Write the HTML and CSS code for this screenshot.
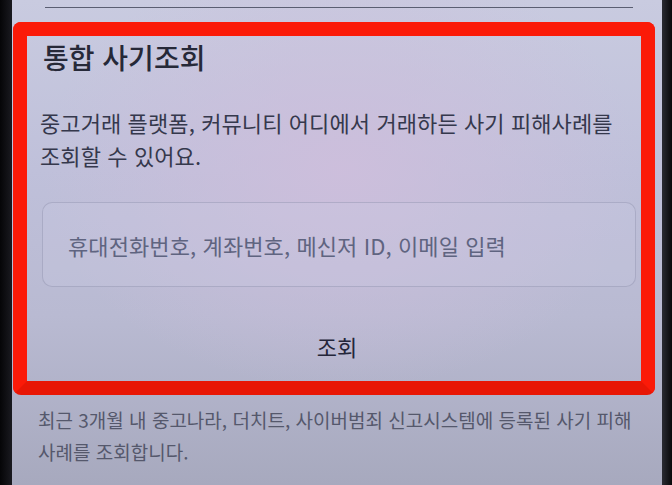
FILE: index.html
```html
<!DOCTYPE html>
<html lang="ko">
<head>
<meta charset="utf-8">
<link rel="stylesheet" href="styles.css">
</head>
<body>
<div class="device">
  <div class="bezel bezel-left"></div>
  <div class="screen">
    <div class="divider"></div>
    <div class="frame">
      <section class="card">
        <h1 class="title">통합 사기조회</h1>
        <p class="desc">중고거래 플랫폼, 커뮤니티 어디에서 거래하든 사기 피해사례를<br>조회할 수 있어요.</p>
        <div class="field"><span class="placeholder">휴대전화번호, 계좌번호, 메신저 ID, 이메일 입력</span></div>
        <div class="action">조회</div>
      </section>
    </div>
    <p class="note">최근 3개월 내 중고나라, 더치트, 사이버범죄 신고시스템에 등록된 사기 피해<br>사례를 조회합니다.</p>
  </div>
  <div class="bezel bezel-right"></div>
</div>
</body>
</html>
```

FILE: styles.css
```css
html, body {
  margin: 0;
  padding: 0;
  width: 672px;
  height: 485px;
  overflow: hidden;
  background: #0b0b0e;
}

.device {
  display: flex;
  width: 672px;
  height: 485px;
  font-family: "Noto Sans CJK KR", "Noto Sans", sans-serif;
}

.bezel-left {
  width: 12px;
  flex: none;
  background: linear-gradient(to right, #050507, #1a1a20);
}

.bezel-right {
  width: 10px;
  flex: none;
  background: linear-gradient(to right, #2a2b33, #08080a);
}

.screen {
  flex: 1;
  display: flex;
  flex-direction: column;
  background:
    radial-gradient(ellipse 300px 220px at 330px 170px, rgba(206, 190, 220, 0.9), rgba(206, 190, 220, 0) 100%),
    linear-gradient(to bottom, #c9cbe0 0%, #bfc0da 35%, #b9bad2 65%, #a7a9be 100%);
}

.divider {
  height: 1px;
  margin: 7px 29px 0 33px;
  background: #5a5e72;
}

.frame {
  margin: 14px 7px 0 1px;
  border: 14px solid #fb1a08;
  border-bottom-color: #e81605;
  border-radius: 8px;
}

.card {
  padding: 4px 5px 0 15px;
  height: 345px;
  box-sizing: border-box;
  display: flex;
  flex-direction: column;
}

.title {
  margin: 0 0 0 1px;
  font-size: 28px;
  line-height: 34px;
  font-weight: 500;
  color: #262938;
}

.desc {
  margin: 32px 0 0 -2px;
  font-size: 22px;
  line-height: 33px;
  color: #35384c;
  letter-spacing: 0.1px;
}

.field {
  margin-top: 30px;
  height: 85px;
  box-sizing: border-box;
  border: 1px solid rgba(125, 128, 158, 0.35);
  border-radius: 10px;
  display: flex;
  align-items: center;
  padding-left: 25px;
  background: rgba(205, 205, 228, 0.25);
}

.placeholder {
  font-size: 22px;
  color: #5f6480;
  letter-spacing: 0.1px;
}

.action {
  margin-top: 44px;
  text-align: center;
  font-size: 22px;
  line-height: 30px;
  color: #24263a;
  padding-right: 4px;
}

.note {
  margin: 9px 0 0 26px;
  font-size: 19px;
  line-height: 32px;
  color: #55586c;
  letter-spacing: 0;
}
```
